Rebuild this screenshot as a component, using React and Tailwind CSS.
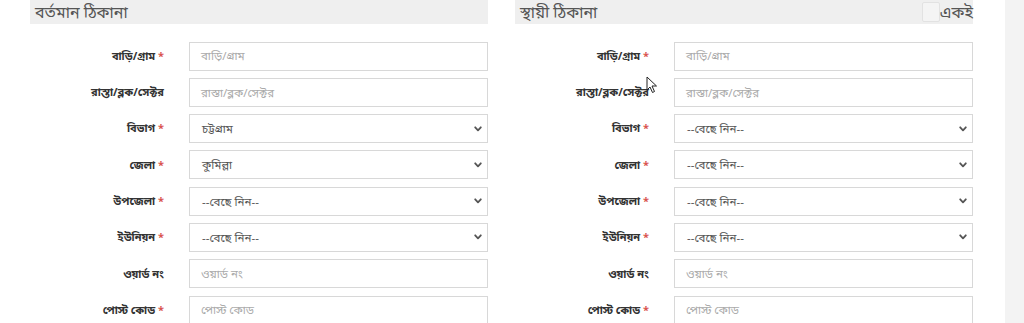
import React from "react";

const FONT = { fontFamily: '"Noto Sans", "Noto Sans Bengali", "Liberation Sans", sans-serif' };

const rows = [
  { label: "বাড়ি/গ্রাম", req: true, type: "input", ph: "বাড়ি/গ্রাম" },
  { label: "রাস্তা/ব্লক/সেক্টর", req: false, type: "input", ph: "রাস্তা/ব্লক/সেক্টর" },
  { label: "বিভাগ", req: true, type: "select", key: "div" },
  { label: "জেলা", req: true, type: "select", key: "dist" },
  { label: "উপজেলা", req: true, type: "select", key: "upa" },
  { label: "ইউনিয়ন", req: true, type: "select", key: "uni" },
  { label: "ওয়ার্ড নং", req: false, type: "input", ph: "ওয়ার্ড নং" },
  { label: "পোস্ট কোড", req: true, type: "input", ph: "পোস্ট কোড" },
];

function Chevron() {
  return (
    <svg width="8" height="6" viewBox="0 0 8 6" className="shrink-0">
      <path d="M1.2 1.3 L4 4.3 L6.8 1.3" fill="none" stroke="#555" strokeWidth="1.8" strokeLinecap="round" strokeLinejoin="round" />
    </svg>
  );
}

function Row({ row, values }) {
  return (
    <div className="flex h-[29px] items-center">
      <div className="w-[159px] pr-[25px] text-right text-[11px] font-bold text-[#333]">
        {row.label}
        {row.req && <span className="text-[#d9534f]"> *</span>}
      </div>
      {row.type === "input" ? (
        <div className="flex h-full w-[299px] items-center border border-[#d8d8d8] bg-white px-[11px] text-[11.5px] text-[#aaa]">
          {row.ph}
        </div>
      ) : (
        <div className="flex h-full w-[299px] items-center justify-between border border-[#d8d8d8] bg-white pl-[12px] pr-[5px] text-[11.5px] text-[#555]">
          <span>{values[row.key]}</span>
          <Chevron />
        </div>
      )}
    </div>
  );
}

function Column({ title, values, same }) {
  return (
    <div className="flex w-[458px] flex-col">
      <div className="flex h-[27px] items-center justify-between bg-[#efefef] pl-[5px] pr-0">
        <span className="text-[16px] text-[#555]">{title}</span>
        {same && (
          <div className="flex items-center">
            <div className="h-[20px] w-[18px] rounded-[2px] border border-[#e2e2e2] bg-[#f4f4f4]" />
            <span className="text-[16px] text-[#555]">একই</span>
          </div>
        )}
      </div>
      <div className="mt-[17.5px] flex flex-col gap-[7.3px]">
        {rows.map((r, i) => (
          <Row key={i} row={r} values={values} />
        ))}
      </div>
    </div>
  );
}

export default function App() {
  const left = { div: "চট্টগ্রাম", dist: "কুমিল্লা", upa: "--বেছে নিন--", uni: "--বেছে নিন--" };
  const right = { div: "--বেছে নিন--", dist: "--বেছে নিন--", upa: "--বেছে নিন--", uni: "--বেছে নিন--" };
  return (
    <div className="relative flex h-[323px] w-[1024px] overflow-hidden bg-white" style={FONT}>
      <div className="flex pl-[30px] gap-[27px]">
        <Column title="বর্তমান ঠিকানা" values={left} />
        <Column title="স্থায়ী ঠিকানা" values={right} same />
      </div>
      <div className="flex-1" />
      <div className="h-full w-[19px] bg-[#f3f3f3]" />
      <svg className="absolute left-[646px] top-[76px]" width="12" height="18" viewBox="0 0 12 18">
        <path d="M1 1 L1 14 L4 11 L6.5 16.5 L8.5 15.5 L6 10 L10.5 10 Z" fill="#fff" stroke="#222" strokeWidth="1" strokeLinejoin="round" />
      </svg>
    </div>
  );
}
